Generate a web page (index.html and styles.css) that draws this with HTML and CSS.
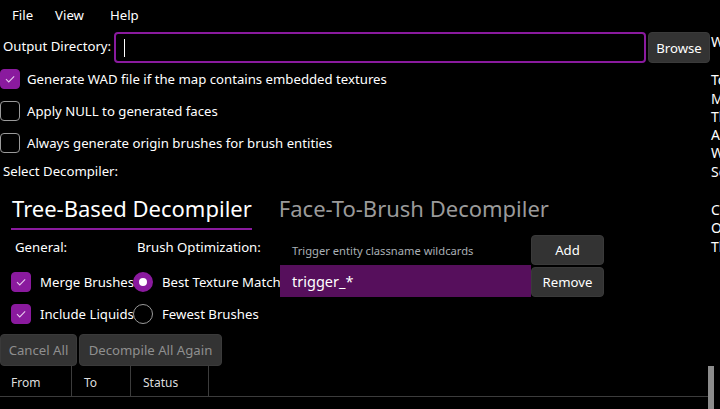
FILE: index.html
```html
<!DOCTYPE html>
<html>
<head>
<meta charset="utf-8">
<link rel="stylesheet" href="styles.css">
</head>
<body>
<div class="app">
  <div class="main">
    <div class="menubar">
      <span class="menu m-file">File</span>
      <span class="menu m-view">View</span>
      <span class="menu m-help">Help</span>
    </div>
    <div class="outrow">
      <span class="outlabel">Output Directory:</span>
      <div class="textbox"><span class="caret"></span></div>
      <button class="btn browse">Browse</button>
    </div>
    <div class="checks">
      <label class="check"><span class="box on"><svg viewBox="0 0 20 20"><path d="M5.5 10.2 L8.6 13.2 L14.6 7" /></svg></span>Generate WAD file if the map contains embedded textures</label>
      <label class="check"><span class="box"></span>Apply NULL to generated faces</label>
      <label class="check"><span class="box"></span>Always generate origin brushes for brush entities</label>
    </div>
    <div class="selectlabel">Select Decompiler:</div>
    <div class="tabs">
      <div class="tab active">Tree-Based Decompiler</div>
      <div class="tab">Face-To-Brush Decompiler</div>
    </div>
    <div class="tabcontent">
      <div class="col general">
        <div class="colhead">General:</div>
        <label class="check small"><span class="box on"><svg viewBox="0 0 20 20"><path d="M5.5 10.2 L8.6 13.2 L14.6 7" /></svg></span>Merge Brushes</label>
        <label class="check small"><span class="box on"><svg viewBox="0 0 20 20"><path d="M5.5 10.2 L8.6 13.2 L14.6 7" /></svg></span>Include Liquids</label>
      </div>
      <div class="col optim">
        <div class="colhead">Brush Optimization:</div>
        <label class="radio"><span class="dot on"></span>Best Texture Match</label>
        <label class="radio"><span class="dot"></span>Fewest Brushes</label>
      </div>
      <div class="col triggers">
        <div class="trighead">Trigger entity classname wildcards</div>
        <div class="trigitem">trigger_*</div>
      </div>
      <div class="col trigbtns">
        <button class="btn tb">Add</button>
        <button class="btn tb">Remove</button>
      </div>
    </div>
    <div class="actions">
      <button class="btn dis cancel">Cancel All</button>
      <button class="btn dis again">Decompile All Again</button>
    </div>
    <div class="table">
      <div class="thead">
        <div class="th c-from">From</div>
        <div class="th c-to">To</div>
        <div class="th c-status">Status</div>
      </div>
      <div class="scrollbar"></div>
    </div>
  </div>
  <div class="side">
    <p class="s-first">Welcome</p>
    <p class="s-gap">To use</p>
    <p>Maps</p>
    <p>The</p>
    <p>A</p>
    <p>When</p>
    <p>Select</p>
    <p class="s-gap">Cancel</p>
    <p>Once</p>
    <p>The</p>
  </div>
</div>
</body>
</html>
```

FILE: styles.css
```css
* { box-sizing: border-box; }
html, body { margin: 0; padding: 0; background: #000; }
body {
  width: 720px; height: 409px; overflow: hidden;
  color: #fff;
  font-family: "Noto Sans", "Open Sans", sans-serif;
  font-size: 13.2px;
}
.app { display: flex; height: 409px; }
.main { width: 710px; flex: none; display: flex; flex-direction: column; }
.side { flex: 1; overflow: hidden; padding-left: 1px; white-space: nowrap; font-size: 14px; }
.side p { margin: 0; line-height: 18.3px; }
.side .s-first { margin-top: 33px; }
.side .s-gap { margin-top: 20px; }

.menubar { height: 30px; display: flex; align-items: center; }
.menu { line-height: 20px; }
.m-file { margin-left: 12px; }
.m-view { margin-left: 22px; }
.m-help { margin-left: 26px; }

.outrow { height: 31px; display: flex; align-items: stretch; margin-top: 2px; }
.outlabel { padding-left: 3px; padding-bottom: 3px; width: 114px; display: flex; align-items: center; white-space: nowrap; }
.textbox {
  flex: 1; border: 2px solid #8a1a9e; border-radius: 4px; margin-right: 2px;
  display: flex; align-items: center; padding-left: 8px;
}
.caret { width: 1px; height: 18px; background: #fff; }
.btn {
  font-family: inherit; font-size: 13.2px; color: #fff; background: #333;
  border: 1px solid #3a3a3a; border-radius: 4px; padding: 0; cursor: default;
}
.browse { width: 62px; }

.checks { display: flex; flex-direction: column; margin-top: 0; }
.check { display: flex; align-items: center; height: 32px; white-space: nowrap; }
.box {
  width: 20px; height: 20px; border: 1px solid #9a9a9a; border-radius: 4px;
  margin-right: 7px; flex: none; display: flex;
}
.box.on { background: #8a1a9e; border-color: #8a1a9e; }
.box svg { width: 100%; height: 100%; }
.box path { fill: none; stroke: #e7c9ee; stroke-width: 1.2; }

.selectlabel { padding-left: 3px; height: 22px; line-height: 22px; margin-top: 1px; }

.tabs { display: flex; height: 44px; padding-left: 11px; margin-top: 4px; }
.tab {
  font-size: 22px; line-height: 32px; color: #9a9a9a; margin-right: 26px;
  padding-left: 1px; white-space: nowrap; padding-top: 6px;
}
.tab.active { color: #fff; border-bottom: 2px solid #8a1a9e; height: 44px; }

.tabcontent { display: flex; margin-top: 5px; height: 95px; }
.col { display: flex; flex-direction: column; }
.colhead { height: 24px; line-height: 24px; margin-bottom: 7px; }
.general { width: 133px; padding-left: 11px; }
.general .colhead { padding-left: 4px; }
.check.small { height: 32px; }
.check.small .box { margin-right: 9px; }
.optim { width: 147px; }
.optim .colhead { padding-left: 4px; }
.radio { display: flex; align-items: center; height: 32px; white-space: nowrap; }
.dot {
  width: 20px; height: 20px; border-radius: 50%; border: 1px solid #9a9a9a;
  margin-right: 9px; flex: none;
}
.dot.on { border: 6px solid #8a1a9e; background: #fff; }
.triggers { width: 251px; }
.trighead {
  height: 30px; line-height: 32px; font-size: 11.2px; color: #aab0b6; padding-left: 12px; white-space: nowrap;
}
.trigitem {
  height: 32px; line-height: 32px; background: #560f5c; font-size: 14.5px; padding-left: 12px;
}
.trigbtns { width: 73px; gap: 2px; }
.tb { height: 30px; }

.actions { display: flex; gap: 2px; height: 32px; margin-top: 4px; }
.dis { color: #8f8f8f; height: 32px; }
.cancel { width: 77px; }
.again { width: 143px; }

.table { position: relative; flex: 1; }
.thead { display: flex; height: 31px; border-bottom: 1px solid #3c3c3c; width: 708px; }
.th { border-right: 1px solid #3c3c3c; padding-left: 11px; padding-top: 2px; line-height: 29px; font-size: 12px; color: #ddd; }
.c-from { width: 72px; }
.c-to { width: 59px; padding-left: 12px; }
.c-status { width: 78px; padding-left: 12px; }
.scrollbar { position: absolute; left: 708px; top: 0; width: 6px; height: 50px; background: #8c8c8c; }
```
